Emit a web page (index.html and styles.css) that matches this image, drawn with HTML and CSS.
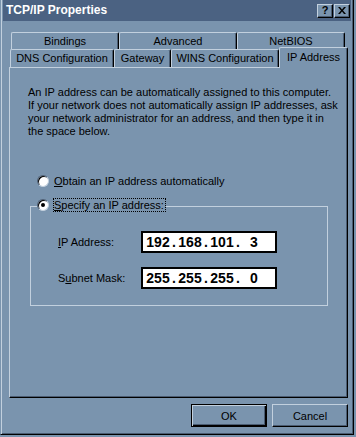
FILE: index.html
```html
<!DOCTYPE html>
<html>
<head>
<meta charset="utf-8">
<title>TCP/IP Properties</title>
<link rel="stylesheet" href="styles.css">
</head>
<body>
<div class="window">
  <div class="titlebar">
    <span class="title">TCP/IP Properties</span>
    <div class="caption-btns">
      <span class="cbtn help">?</span>
      <span class="cbtn close"><svg width="8" height="7" viewBox="0 0 8 7"><path d="M0 0h2l2 2.4L6 0h2L5 3.5 8 7H6L4 4.6 2 7H0l3-3.5z" fill="#000"/></svg></span>
    </div>
  </div>
  <div class="body">
    <div class="tabs">
      <div class="row back">
        <div class="tab t-bind">Bindings</div>
        <div class="tab t-adv">Advanced</div>
        <div class="tab t-nb">NetBIOS</div>
      </div>
      <div class="row front">
        <div class="tab t-dns">DNS Configuration</div>
        <div class="tab t-gw">Gateway</div>
        <div class="tab t-wins">WINS Configuration</div>
        <div class="tab t-ip selected">IP Address</div>
      </div>
    </div>
    <div class="panel">
      <p class="desc">An IP address can be automatically assigned to this computer.<br>If your network does not automatically assign IP addresses, ask<br>your network administrator for an address, and then type it in<br>the space below.</p>
      <div class="radio-row first">
        <span class="radio"></span>
        <span class="rlabel"><u>O</u>btain an IP address automatically</span>
      </div>
      <fieldset class="group">
        <legend class="radio-row">
          <span class="radio checked"></span>
          <span class="rlabel focus"><u>S</u>pecify an IP address:</span>
        </legend>
        <div class="field-row">
          <span class="flabel"><u>I</u>P Address:</span>
          <div class="ipfield"><span class="seg">192</span><span class="dot">.</span><span class="seg">168</span><span class="dot">.</span><span class="seg">101</span><span class="dot">.</span><span class="seg">3</span></div>
        </div>
        <div class="field-row">
          <span class="flabel">S<u>u</u>bnet Mask:</span>
          <div class="ipfield"><span class="seg">255</span><span class="dot">.</span><span class="seg">255</span><span class="dot">.</span><span class="seg">255</span><span class="dot">.</span><span class="seg">0</span></div>
        </div>
      </fieldset>
    </div>
    <div class="actions">
      <button class="btn default">OK</button>
      <button class="btn">Cancel</button>
    </div>
  </div>
</div>
</body>
</html>
```
FILE: styles.css
```css
:root {
  --face: #7a94ae;
  --hi: #c2d0de;
  --sh: #4a5c72;
  --title: #4b6282;
}

* { box-sizing: border-box; }

html, body {
  margin: 0;
  padding: 0;
}

body {
  width: 356px;
  height: 437px;
  overflow: hidden;
  background: var(--face);
  font-family: "Liberation Sans", Arial, sans-serif;
  font-size: 11px;
  line-height: 13px;
  color: #000;
}

.window {
  width: 354px;
  height: 435px;
  border-left: 1px solid var(--face);
  border-right: 1px solid #000;
  border-bottom: 1px solid #000;
  padding: 0 2px 2px 2px;
  box-shadow: inset 1px 0 0 var(--hi), inset -1px -1px 0 var(--sh);
}

.titlebar {
  height: 21px;
  background: var(--title);
  display: flex;
  align-items: center;
  padding: 0 1px 0 3px;
  color: #fff;
  font-weight: bold;
  font-size: 12px;
}

.caption-btns {
  margin-left: auto;
  display: flex;
  gap: 1px;
}

.cbtn {
  width: 16px;
  height: 14px;
  background: var(--face);
  border: 1px solid;
  border-color: var(--hi) #000 #000 var(--hi);
  box-shadow: inset -1px -1px 0 var(--sh);
  color: #000;
  display: flex;
  align-items: center;
  justify-content: center;
  font-size: 11px;
  line-height: 11px;
  font-weight: bold;
}

.body {
  padding: 11px 3px 0 6px;
}

.row {
  display: flex;
}

.back {
  height: 17px;
  margin-left: 2px;
}

.front {
  height: 18px;
  margin-left: 1px;
}

.tab {
  border-top: 1px solid var(--hi);
  border-left: 1px solid var(--hi);
  border-right: 1px solid #000;
  box-shadow: inset -1px 0 0 var(--sh);
  border-top-left-radius: 2px;
  border-top-right-radius: 2px;
  display: flex;
  align-items: center;
  justify-content: center;
  white-space: nowrap;
  background: var(--face);
}

.t-bind { width: 108px; }
.t-adv { width: 118px; }
.t-nb { width: 108px; }
.t-dns { width: 104px; }
.t-gw { width: 57px; }
.t-wins { width: 108px; }

.t-ip {
  width: 69px;
  height: 21px;
  margin-top: -2px;
  position: relative;
  z-index: 1;
  padding-bottom: 1px;
}

.panel {
  width: 339px;
  height: 331px;
  border-top: 1px solid var(--hi);
  border-left: 1px solid var(--hi);
  border-right: 1px solid #000;
  border-bottom: 1px solid #000;
  box-shadow: inset -1px -1px 0 var(--sh);
  padding: 18px 0 0 18px;
}

.desc {
  margin: 0;
  white-space: nowrap;
}

.radio-row {
  display: flex;
  align-items: center;
  gap: 4px;
  height: 14px;
}

.radio-row.first {
  margin-top: 36px;
  margin-left: 9px;
}

.radio {
  width: 12px;
  height: 12px;
  border-radius: 50%;
  background: #fff;
  border: 1px solid;
  border-color: var(--sh) var(--hi) var(--hi) var(--sh);
  box-shadow: inset 1px 1px 0 #000;
  display: flex;
  align-items: center;
  justify-content: center;
  flex: none;
}

.radio.checked::after {
  content: "";
  width: 4px;
  height: 4px;
  border-radius: 50%;
  background: #000;
}

.rlabel {
  white-space: nowrap;
  padding-left: 1px;
}

.rlabel.focus {
  border: 1px dotted #000;
  padding: 0 1px 0 0;
  line-height: 12px;
}

.group {
  margin: 9px 0 0 2px;
  width: 298px;
  border: 1px solid var(--hi);
  padding: 16px 0 16px 6px;
  min-width: 0;
}

.group legend.radio-row {
  height: 18px;
  padding: 0 0 2px 0;
  margin: 0;
}

.field-row {
  display: flex;
  align-items: center;
  margin-left: 21px;
}

.field-row + .field-row {
  margin-top: 14px;
}

.flabel {
  width: 83px;
  white-space: nowrap;
}

.ipfield {
  width: 136px;
  height: 22px;
  background: #fff;
  border: 2px solid #000;
  display: flex;
  align-items: center;
  padding-left: 3px;
  font-size: 14px;
  font-weight: bold;
  line-height: 16px;
}

.seg {
  width: 24px;
  text-align: center;
}

.dot {
  width: 8px;
  text-align: center;
}

.actions {
  display: flex;
  justify-content: flex-end;
  gap: 5px;
  margin-top: 6px;
}

.btn {
  width: 76px;
  height: 23px;
  background: var(--face);
  border: 1px solid;
  border-color: var(--hi) #000 #000 var(--hi);
  box-shadow: inset -1px -1px 0 var(--sh);
  font-family: "Liberation Sans", Arial, sans-serif;
  font-size: 11px;
  color: #000;
  padding: 0;
  margin: 0;
}

.btn.default {
  border: 1px solid #000;
  box-shadow: inset 1px 1px 0 var(--hi), inset -1px -1px 0 #000, inset -2px -2px 0 var(--sh);
}
```
